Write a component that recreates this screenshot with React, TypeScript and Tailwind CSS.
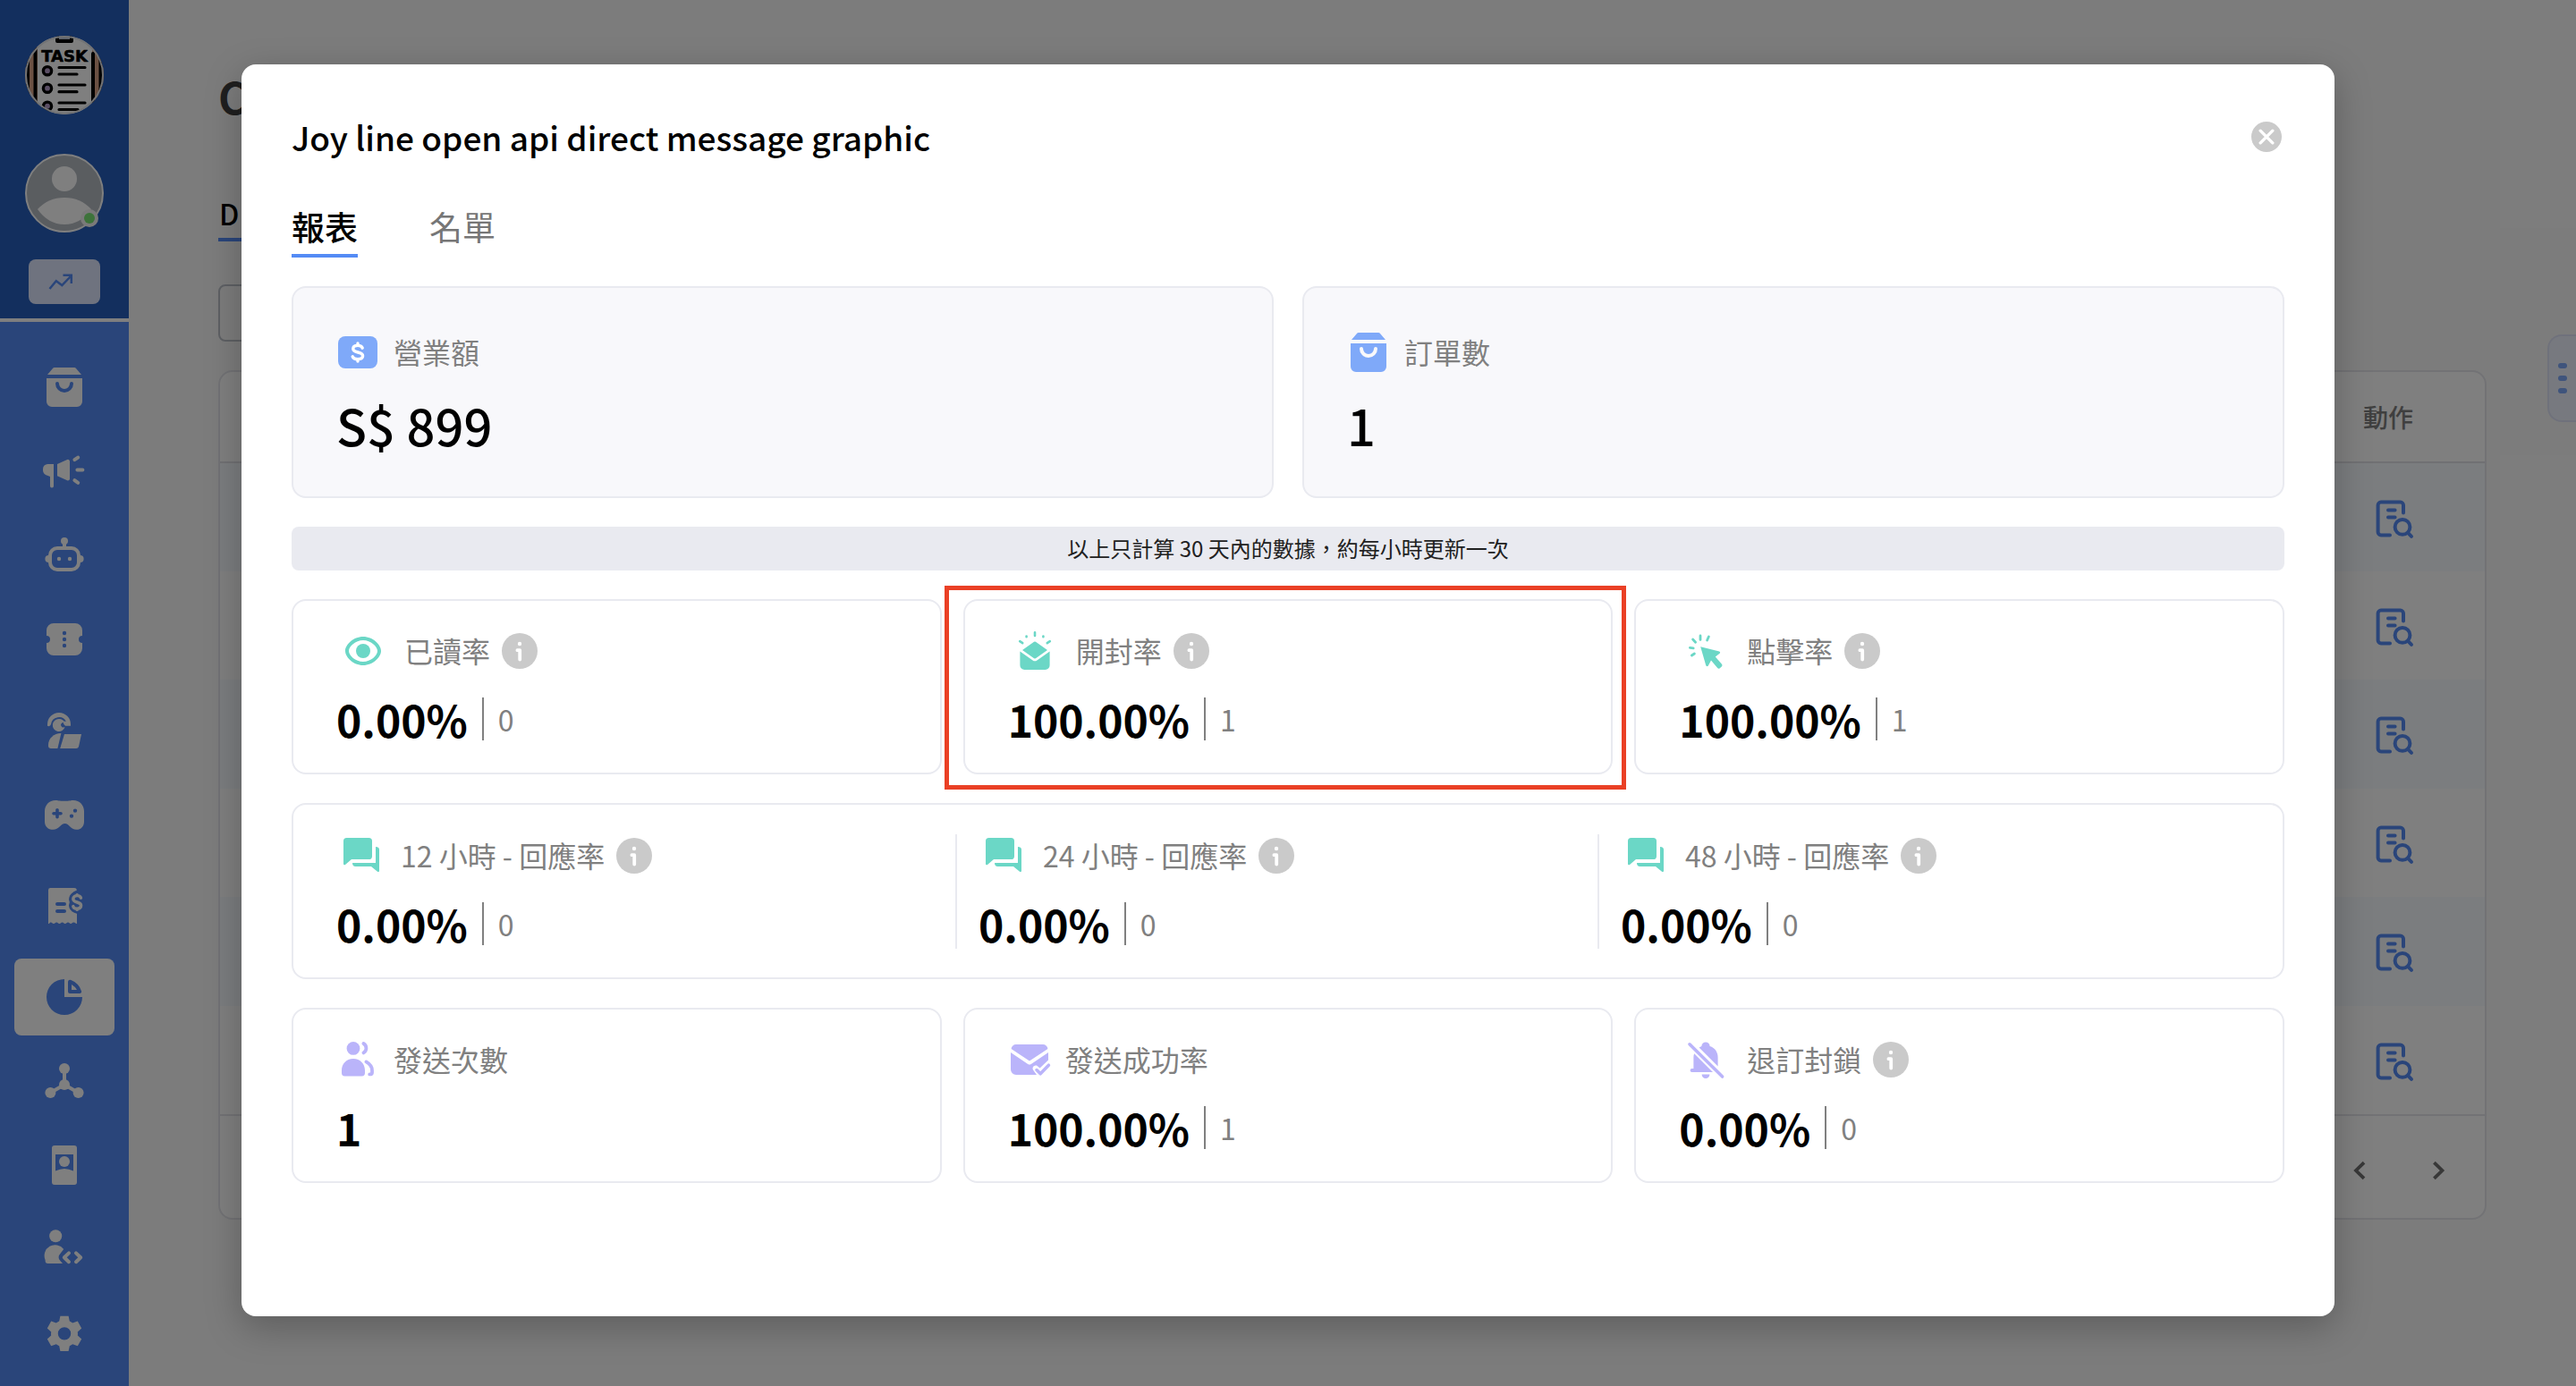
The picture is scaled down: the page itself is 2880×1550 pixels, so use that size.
import React from 'react';

type IconProps = { className?: string };

const Svg = ({ className = 'size-12', children }: { className?: string; children: React.ReactNode }) => (
  <svg viewBox="0 0 24 24" className={`shrink-0 ${className}`} fill="currentColor" aria-hidden="true">
    {children}
  </svg>
);

const stroke = {
  fill: 'none',
  stroke: 'currentColor',
  strokeWidth: 2,
  strokeLinecap: 'round' as const,
  strokeLinejoin: 'round' as const,
};

/* ---------- sidebar icons ---------- */

const BagIcon = ({ className }: IconProps) => (
  <Svg className={className}>
    <path d="M5.6 1.4A1 1 0 0 1 6.4 1h11.2a1 1 0 0 1 .8.4L21.5 5h-19z" />
    <path
      fillRule="evenodd"
      d="M2 7h20v13a3 3 0 0 1-3 3H5a3 3 0 0 1-3-3zM8 9a1 1 0 0 0-1 1 5 5 0 0 0 10 0 1 1 0 0 0-2 0 3 3 0 0 1-6 0 1 1 0 0 0-1-1z"
    />
  </Svg>
);

const MegaphoneIcon = () => (
  <Svg>
    <path d="M6 8v12.200a1 1 0 0 1-2 0v-5.200L2.800 14.500A3 3 0 0 1 0 11.500V10.700A2.700 2.700 0 0 1 2.700 8z" />
    <path d="M8 8 13.600 5.500a1 1 0 0 1 1.400.9v9.800a1 1 0 0 1-1.400.9L8 14.600z" />
    <path {...stroke} d="M19.200 11.300h3M17.700 5.600l1.900-1.300M17.700 17.100l1.900 1.300" />
  </Svg>
);

const RobotIcon = () => (
  <Svg>
    <rect x="4" y="8" width="16" height="12" rx="4" {...stroke} />
    <circle cx="12" cy="4" r="2" />
    <path d="M11 5h2v3h-2zM4 12v4h-.8a2 2 0 0 1 0-4zM20 12v4h.8a2 2 0 0 0 0-4z" />
    <circle cx="9" cy="14" r="1.100" />
    <circle cx="15" cy="14" r="1.100" />
  </Svg>
);

const TicketIcon = () => (
  <Svg>
    <path
      fillRule="evenodd"
      d="M6 3h12a4 4 0 0 1 4 4v3a2 2 0 0 0 0 4v3a4 4 0 0 1-4 4H6a4 4 0 0 1-4-4v-3a2 2 0 0 0 0-4V7a4 4 0 0 1 4-4zm6 4.400a1.100 1.100 0 1 0 0 2.200 1.100 1.100 0 0 0 0-2.200zm0 3.500a1.100 1.100 0 1 0 0 2.200 1.100 1.100 0 0 0 0-2.200zm0 3.500a1.100 1.100 0 1 0 0 2.200 1.100 1.100 0 0 0 0-2.200z"
    />
  </Svg>
);

const AgentIcon = () => (
  <Svg>
    <path d="M2.500 9.400V8.500a6.500 6.500 0 0 1 13 0v.9h-3l-1-1.200a1 1 0 0 1 1.500-1.200A4.500 4.500 0 0 0 4.500 8.500 1.500 1.500 0 0 1 2.500 9.400z" />
    <path
      fillRule="evenodd"
      d="M9 5.500a3.500 3.500 0 1 0 3.300 4.400 1.400 1.400 0 0 1-2.300-1.100 1.400 1.400 0 0 1 2.300-1A3.500 3.500 0 0 0 9 5.500z"
    />
    <path d="M10.200 13.500C6 13.500 3 16.500 3 20v.5A1.500 1.500 0 0 0 4.500 22h3.700z" />
    <path d="M12 14h9.500L20 21a1.500 1.500 0 0 1-1.400 1H9.600z" />
  </Svg>
);

const GameIcon = () => (
  <Svg>
    <path
      fillRule="evenodd"
      d="M7 4c1.200 0 2 .4 5 .4S15.800 4 17 4c3.500 0 6 2.800 6 6v6c0 2.600-1.700 4.400-4.300 4.400-3.200 0-4-3.400-6.400-3.400s-3.400 3.400-6.600 3.400C2.800 20.400 1 18.600 1 16v-6c0-3.200 2.500-6 6-6zm1 4.500c-.5 0-.9.400-.9.900v1.100H6a.9.900 0 0 0 0 1.800h1.100v1.100a.9.900 0 0 0 1.800 0v-1.100H10a.9.900 0 0 0 0-1.800H8.900V9.400c0-.5-.4-.9-.9-.9zM18 8.700a1.100 1.100 0 1 0 0 2.200 1.100 1.100 0 0 0 0-2.200zm-2 3a1.100 1.100 0 1 0 0 2.200 1.100 1.100 0 0 0 0-2.200z"
    />
  </Svg>
);

const ReceiptIcon = () => (
  <Svg>
    <path
      fillRule="evenodd"
      d="M3 3.200A1.200 1.200 0 0 1 4.200 2h13.300a1.500 1.500 0 0 1 1.500 1.200l-1.800.9c-1.900 1.200-2.700 2.800-2.700 4.400l.4 1.500-.4 1.600c0 1.800 1.200 4 4.500 4.800V22c-1 0-.8-.8-1.800-.8s-.8.800-1.600.8-.8-.8-1.600-.8-.8.800-1.600.8-.8-.8-1.600-.8-.8.800-1.600.8-.8-.8-1.600-.8-.8.800-1.600.8-.8-.8-1.600-.8S4 22 3 22zM8 10a1 1 0 0 0 0 2h4a1 1 0 0 0 0-2zm0 4a1 1 0 0 0 0 2h4a1 1 0 0 0 0-2z"
    />
    <path
      {...stroke}
      strokeWidth="1.700"
      d="M21.200 7.600c-.2-1-1-1.300-2.100-1.300s-2.200.6-2.200 1.800c0 2.500 4.400 1.300 4.400 3.700 0 1.200-1 1.800-2.200 1.800s-2-.4-2.200-1.300M19.100 5.800v.5M19.100 13.700v.5"
    />
  </Svg>
);

const PieIcon = () => (
  <Svg>
    <path d="M12 2v10h10A10 10 0 1 1 12 2z" />
    <path fillRule="evenodd" d="M14 3.500a1.200 1.200 0 0 1 1.700-1A10 10 0 0 1 21.500 8.600 1 1 0 0 1 20.600 10H15a1 1 0 0 1-1-1zM16 5v3h3a8 8 0 0 0-3-3z" />
  </Svg>
);

const NetworkIcon = () => (
  <Svg>
    <circle cx="12" cy="5" r="3" />
    <circle cx="12" cy="14" r="3" />
    <circle cx="4.200" cy="18.500" r="3" />
    <circle cx="19.800" cy="18.500" r="3" />
    <path {...stroke} d="M12 5v9M12 14l-7.800 4.500M12 14l7.800 4.500" />
  </Svg>
);

const BadgeIcon = () => (
  <Svg>
    <path fillRule="evenodd" d="M6.500 1h11A1.500 1.500 0 0 1 19 2.500v19a1.500 1.500 0 0 1-1.500 1.500h-11A1.500 1.500 0 0 1 5 21.500v-19A1.500 1.500 0 0 1 6.500 1zM7 6v9.300Q12 12.700 17 15.300V6z" />
    <circle cx="12" cy="10" r="3" />
  </Svg>
);

const DevIcon = () => (
  <Svg>
    <circle cx="7.100" cy="4.600" r="3.500" />
    <path d="M11.600 12A6 6 0 0 0 1.300 18v.4A1.600 1.600 0 0 0 3 20h8l-1.400-1.600a2.600 2.600 0 0 1 0-3.800z" />
    <path {...stroke} d="M14.500 14.200 11.900 16.600l2.600 2.500M18.500 14.200l2.600 2.400-2.600 2.500" />
  </Svg>
);

const GearIcon = () => (
  <Svg>
    <path
      fillRule="evenodd"
      d="M9.700 2.400h4.600l.6 2.900a7 7 0 0 1 1.700 1l2.800-1 2.200 3.900-2.200 2a7 7 0 0 1 0 2l2.200 2-2.200 3.900-2.800-1a7 7 0 0 1-1.700 1l-.6 2.900H9.700l-.6-2.900a7 7 0 0 1-1.700-1l-2.800 1-2.200-3.900 2.200-2a7 7 0 0 1 0-2l-2.200-2 2.200-3.900 2.800 1a7 7 0 0 1 1.700-1zM12 8.600a3.600 3.600 0 1 0 0 7.200 3.600 3.600 0 0 0 0-7.200z"
    />
  </Svg>
);

/* ---------- report icons ---------- */

const MoneyIcon = () => (
  <Svg>
    <rect x="1" y="3" width="22" height="18" rx="4" />
    <path
      d="M14.600 9.600c-.3-1-1.300-1.400-2.600-1.400s-2.600.5-2.600 1.800c0 2.800 5.400 1.200 5.400 4 0 1.300-1.400 1.800-2.800 1.800s-2.500-.4-2.900-1.400M12 7v1.200M12 15.800V17"
      fill="none"
      stroke="#fff"
      strokeWidth="1.700"
      strokeLinecap="round"
    />
  </Svg>
);

const EyeIcon = () => (
  <Svg>
    <path fillRule="evenodd" d="M12 4c5.600 0 10 4.600 10 8s-4.400 8-10 8S2 15.400 2 12s4.400-8 10-8zm0 2c-4.300 0-8 3.500-8 6s3.700 6 8 6 8-3.500 8-6-3.700-6-8-6z" />
    <circle cx="12" cy="12" r="4" />
  </Svg>
);

const OpenMailIcon = () => (
  <Svg>
    <path d="M11 7.200a1.500 1.500 0 0 1 2 0l6 4.300-6 4.300a1.500 1.500 0 0 1-2 0l-6-4.300z" />
    <path d="M3.700 12.300 10.800 17.200a2 2 0 0 0 2.400 0L20.300 12.300V20a2.500 2.500 0 0 1-2.500 2.500H6.200A2.500 2.500 0 0 1 3.700 20z" />
    <path {...stroke} strokeWidth="1.300" d="M12 1.600v1.900M7.300 3.800v.3M16.700 3.800v.3M3.600 6.600l1.500 1M20.400 6.600l-1.500 1" />
  </Svg>
);

const ClickIcon = () => (
  <Svg>
    <path d="M9.100 9.600 19.600 12.200a.7.700 0 0 1 .2 1.200l-2.400 1.800 3.600 4.200a.9.900 0 0 1-.1 1.300l-1 .9a.9.900 0 0 1-1.300-.1l-3.600-4.200-1.600 2.900a.7.700 0 0 1-1.300-.2z" />
    <path {...stroke} strokeWidth="1.400" d="M9 3.500v2.200M13.700 4l-.9 2M4.800 5.500l1.500 1.600M3.200 10.200l1.900.2M4.200 14.500l1.500-1" />
  </Svg>
);

const ChatIcon = () => (
  <Svg>
    <path d="M3.800 2h12.400A1.800 1.800 0 0 1 18 3.800v8.400a1.800 1.800 0 0 1-1.800 1.800H6.500L3 17c-.4.300-1 0-1-.5V3.800A1.800 1.800 0 0 1 3.800 2z" />
    <path d="M20 7c1.200 0 2 .6 2 1.500V20.500c0 .5-.6.700-1 .4L17.500 18H8.800C7.600 18 7 17.200 7 16h13z" />
  </Svg>
);

const PeopleIcon = () => (
  <Svg>
    <circle cx="9.500" cy="5.700" r="3.700" />
    <path d="M9.500 11.500c4 0 6.500 3 6.500 6.500v1.500a1.700 1.700 0 0 1-1.700 1.700H4.700A1.700 1.700 0 0 1 3 19.500V18c0-3.500 2.500-6.500 6.500-6.500z" />
    <path {...stroke} strokeWidth="1.900" d="M15.200 3a3 3 0 0 1 0 5.200M16.700 13.200c2 1.200 3.300 3 3.300 4.800v1.200c0 .7-.4 1-1.400 1" />
  </Svg>
);

const MailCheckIcon = () => (
  <Svg>
    <path d="M4.500 3.500h15A2.700 2.700 0 0 1 22.200 6L12 12.800 1.800 6a2.700 2.700 0 0 1 2.700-2.500z" />
    <path d="M1.500 8l9.600 6.500a1.600 1.600 0 0 0 1.800 0L22.500 8v4.300l-4.700 4.500-1.500-1.300c-1.600-.8-3.200 1-2.200 2.400L16 20.500H4.500a3 3 0 0 1-3-3z" />
    <path {...stroke} strokeWidth="1.800" d="M16 17.800l2.100 2.100 4.600-4.800" />
  </Svg>
);

const BellOffIcon = () => (
  <Svg>
    <path d="M9.700 4.500A2.300 2.300 0 0 1 14.300 4.500c3 .9 4.500 3.500 4.500 6.300v5L8.300 5.200zM5.600 8.600 16 19H4.300a1 1 0 0 1 0-2h.9v-6.200c0-.8.100-1.500.4-2.200zM9.800 20.300h4.400a2.200 2.200 0 0 1-4.400 0z" />
    <path {...stroke} strokeWidth="1.800" d="M3 3.400 21.300 21.500" />
  </Svg>
);

const InfoIcon = () => (
  <Svg className="size-12">
    <circle cx="12" cy="12" r="10" fill="#cacaca" />
    <circle cx="12" cy="8" r="1.100" fill="#fff" />
    <path d="M10.700 11.600h1.400v5.200" fill="none" stroke="#fff" strokeWidth="1.900" strokeLinecap="round" strokeLinejoin="round" />
  </Svg>
);

const DocSearchIcon = () => (
  <Svg>
    <path {...stroke} d="M10 21.200H5A1.700 1.700 0 0 1 3.300 19.500V4.500A1.700 1.700 0 0 1 5 2.800h10.800A1.700 1.700 0 0 1 17.500 4.500v4.200M9 7.300h3.800M9 11.200h3.800" />
    <circle cx="17" cy="16.700" r="4.200" {...stroke} />
    <path {...stroke} d="M20.300 20.200l1.700 1.700" />
  </Svg>
);

/* ---------- sidebar ---------- */

const Logo = () => (
  <svg viewBox="0 0 88 88" className="size-22 rounded-full bg-white" role="img" aria-label="Task">
    <rect x="0" width="14" height="88" fill="#d8a286" />
    <rect x="75" width="13" height="88" fill="#d8a286" />
    <path d="M3 16v56M11.500 14v62M76 20v54M84.500 20v48" stroke="#000" strokeWidth="4" strokeLinecap="round" />
    <path d="M36 0v6h16V0" fill="#b9c3d4" stroke="#000" strokeWidth="4" strokeLinejoin="round" />
    <text
      x="44"
      y="29"
      textAnchor="middle"
      fontFamily="DejaVu Sans"
      fontWeight="700"
      fontSize="18"
      stroke="#000"
      strokeWidth="0.600"
      strokeLinejoin="round"
    >
      TASK
    </text>
    <path d="M38 35.500h29M38 43h20M38 55h29M38 62.700h20M38 75h29M38 82.500h21" stroke="#000" strokeWidth="3.200" strokeLinecap="round" />
    {[39.2, 58.7, 78.7].map((y) => (
      <circle key={y} cx="25" cy={y} r="4.600" fill="#b79fcb" stroke="#000" strokeWidth="3.400" />
    ))}
    <circle cx="44" cy="44" r="43" fill="none" stroke="#e5e7eb" strokeWidth="2" />
  </svg>
);

const Avatar = () => (
  <svg viewBox="0 0 88 88" className="mt-11 size-22" role="img" aria-label="Online">
    <circle cx="44" cy="44" r="43" fill="#b4bac1" stroke="#fff" strokeWidth="2" />
    <circle cx="44" cy="28" r="14" fill="#fff" />
    <path d="M14 62Q26 49 44 49T74 62Q62 79 44 79T14 62z" fill="#fff" />
    <circle cx="72" cy="72" r="10" fill="#f4f4f4" />
    <circle cx="72" cy="72" r="6" fill="#7ae675" />
  </svg>
);

const navGroups = [
  [
    { name: '商店', icon: BagIcon },
    { name: '廣播', icon: MegaphoneIcon },
    { name: '機器人', icon: RobotIcon },
    { name: '票券', icon: TicketIcon },
  ],
  [
    { name: '客服', icon: AgentIcon },
    { name: '遊戲', icon: GameIcon },
  ],
  [{ name: '帳單', icon: ReceiptIcon }],
  [
    { name: '分析', icon: PieIcon, active: true },
    { name: '整合', icon: NetworkIcon },
    { name: '會員', icon: BadgeIcon },
    { name: '開發者', icon: DevIcon },
    { name: '設定', icon: GearIcon },
  ],
];

const Sidebar = () => (
  <aside className="flex w-36 shrink-0 flex-col bg-[#548bf5]">
    <div className="flex flex-col items-center border-b-4 border-white bg-[#265ebc] pt-10 pb-4">
      <Logo />
      <Avatar />
      <button type="button" aria-label="趨勢" className="mt-[30px] flex h-[50px] w-20 items-center justify-center rounded-lg bg-[#dee7ff] text-[#548bf5]">
        <svg viewBox="0 0 36 20" className="h-5 w-9" fill="none" stroke="currentColor" strokeWidth="2.500" aria-hidden="true">
          <path d="M1.500 18 8.800 9.300l6.500 4.700L26 3M16.500 2.800h9.300V12" strokeLinejoin="miter" />
        </svg>
      </button>
    </div>
    <nav className="flex flex-col gap-4 px-4 pt-[30px]">
      {navGroups.map((group, i) => (
        <div key={i} className="flex flex-col gap-2">
          {group.map(({ name, icon: Icon, active }) => (
            <a
              key={name}
              href="#"
              aria-label={name}
              className={`flex h-[86px] items-center justify-center rounded-lg ${active ? 'bg-white text-[#548bf5]' : 'text-white'}`}
            >
              <Icon />
            </a>
          ))}
        </div>
      ))}
    </nav>
  </aside>
);

/* ---------- page behind the dialog ---------- */

const Page = () => (
  <main className="flex min-w-0 flex-1 bg-[#f9f9f9]">
    <div className="min-w-0 flex-1 pt-[72px] pr-[68px] pl-[100px]">
      <h1 className="text-[48px] leading-[70px] font-bold text-[#3f3f3f]">C</h1>
      <div className="mt-[72px] flex">
        <button type="button" className="flex h-14 w-24 border-b-4 border-[#548bf5] pl-px text-[32px] leading-[48px] font-medium">
          D
        </button>
      </div>
      <input aria-label="搜尋" className="mt-12 block h-16 w-160 rounded-lg border-2 border-[#bcc0c8]" />
      <section className="mt-8 overflow-hidden rounded-2xl border-2 border-[#e4e5ea] bg-white">
        <table className="w-full text-left">
          <thead>
            <tr className="h-[101px] border-b-2 border-[#e0e1e6]">
              <th className="pl-[2396px] text-[28px] font-medium whitespace-nowrap text-[#7f7f7f]">動作</th>
            </tr>
          </thead>
          <tbody>
            {[1, 2, 3, 4, 5, 6].map((row) => (
              <tr key={row} className="h-[121px] odd:h-[122px] odd:bg-[#f7fafe]">
                <td className="pt-0.5 pl-[2406px] text-[#548bf5]">
                  <button type="button" aria-label="查看報表" className="block">
                    <DocSearchIcon />
                  </button>
                </td>
              </tr>
            ))}
          </tbody>
        </table>
        <div className="flex h-[116px] items-center justify-end gap-10 border-t-2 border-[#e4e5ea] pt-2 pr-7 text-[#707070]">
          {['上一頁', '下一頁'].map((name, i) => (
            <button key={name} type="button" aria-label={name}>
              <Svg>
                <path d={i === 0 ? 'M14.500 7.600 10 12l4.500 4.400' : 'M9.700 7.600 14.200 12l-4.500 4.400'} fill="none" stroke="currentColor" strokeWidth="1.900" />
              </Svg>
            </button>
          ))}
        </div>
      </section>
    </div>
    <div className="w-8 shrink-0 pt-[374px]">
      <button type="button" aria-label="更多" className="flex h-[98px] w-full flex-col justify-center gap-2 rounded-l-2xl border-2 border-r-0 border-[#dfe3f6] bg-[#eef3ff] pl-2.5">
        {[1, 2, 3].map((dot) => (
          <span key={dot} className="h-1.5 w-2.5 rounded-full bg-[#7ea8f8]" />
        ))}
      </button>
    </div>
  </main>
);

/* ---------- report ---------- */

type Metric = {
  label: string;
  value: string;
  count?: string;
  info?: boolean;
  icon: () => React.JSX.Element;
  slot: string;
};

const openMetrics: Metric[] = [
  { label: '已讀率', value: '0.00%', count: '0', info: true, icon: EyeIcon, slot: 'w-[60px] text-[#6bd7c6]' },
  { label: '開封率', value: '100.00%', count: '1', info: true, icon: OpenMailIcon, slot: 'w-[60px] text-[#6bd7c6]' },
  { label: '點擊率', value: '100.00%', count: '1', info: true, icon: ClickIcon, slot: 'w-[60px] text-[#6bd7c6]' },
];

const replyMetrics: Metric[] = ['12', '24', '48'].map((hours) => ({
  label: `${hours} 小時 - 回應率`,
  value: '0.00%',
  count: '0',
  info: true,
  icon: ChatIcon,
  slot: 'w-14 text-[#6bd7c6]',
}));

const sendMetrics: Metric[] = [
  { label: '發送次數', value: '1', icon: PeopleIcon, slot: 'w-12 text-[#bab4fa]' },
  { label: '發送成功率', value: '100.00%', count: '1', icon: MailCheckIcon, slot: 'w-12 text-[#bab4fa]' },
  { label: '退訂封鎖', value: '0.00%', count: '0', info: true, icon: BellOffIcon, slot: 'w-[60px] text-[#bab4fa]' },
];

const Label = ({ label, info, icon: Icon, slot }: Pick<Metric, 'label' | 'info' | 'icon' | 'slot'>) => (
  <div className="flex h-12 items-center text-[32px] leading-[46px] text-[#808080]">
    <span className={`mr-4 flex shrink-0 justify-center ${slot}`}>
      <Icon />
    </span>
    <h3 className="pb-0.5">{label}</h3>
    {info && (
      <button type="button" aria-label={`${label}說明`} className="ml-[9px]">
        <InfoIcon />
      </button>
    )}
  </div>
);

const MetricBody = ({ metric }: { metric: Metric }) => (
  <>
    <Label {...metric} />
    <div className="mt-7 flex h-12 items-center">
      <strong className="text-[48px] leading-12 font-bold">{metric.value}</strong>
      {metric.count && <span className="ml-4 border-l-2 border-[#808080] pl-4 text-[32px] leading-12 text-[#808080]">{metric.count}</span>}
    </div>
  </>
);

const MetricCard = ({ metric, highlighted }: { metric: Metric; highlighted?: boolean }) => (
  <article className="relative rounded-2xl border-2 border-[#e9eaf0] px-12 pt-8 pb-9">
    <MetricBody metric={metric} />
    {highlighted && <div className="pointer-events-none absolute -top-[17px] -right-[17px] -bottom-[19px] -left-[23px] border-5 border-[#ea4025]" />}
  </article>
);

const SummaryCard = ({ label, value, icon }: { label: string; value: string; icon: Metric['icon'] }) => (
  <article className="rounded-2xl border-2 border-[#e9eaf0] bg-[#f8f8fb] px-12 pt-12 pb-13">
    <Label label={label} icon={icon} slot="w-12 text-[#7fa9f9]" />
    <p className="mt-[29px] text-[56px] leading-14 font-medium">{value}</p>
  </article>
);

const ReportDialog = () => (
  <div role="dialog" aria-modal="true" aria-labelledby="report-title" className="flex-1 rounded-2xl bg-white px-14 pt-14 pb-[149px] text-black shadow-[0_12px_40px_rgba(0,0,0,0.25)]">
    <header className="flex h-[50px] items-center justify-between">
      <h2 id="report-title" className="text-[37px] leading-[50px] font-medium">
        Joy line open api direct message graphic
      </h2>
      <button type="button" aria-label="關閉" className="size-10">
        <Svg className="size-10">
          <circle cx="12" cy="12" r="10.200" fill="#cacaca" />
          <path d="M7.900 7.900l8.200 8.200M16.100 7.900l-8.200 8.200" stroke="#fff" strokeWidth="2" strokeLinecap="round" />
        </Svg>
      </button>
    </header>
    <div role="tablist" className="mt-11 flex gap-20 text-[37px] leading-[62px]">
      <button role="tab" aria-selected="true" type="button" className="border-b-4 border-[#548bf5] font-medium">
        報表
      </button>
      <button role="tab" aria-selected="false" type="button" className="border-b-4 border-transparent text-[#767676]">
        名單
      </button>
    </div>
    <div className="mt-8 flex flex-col gap-8">
      <section className="grid grid-cols-2 gap-8">
        <SummaryCard label="營業額" value="S$ 899" icon={MoneyIcon} />
        <SummaryCard label="訂單數" value="1" icon={BagIcon} />
      </section>
      <p className="rounded-lg bg-[#e9eaf0] pb-0.5 text-center text-[24px] leading-[47px] text-[#212121]">以上只計算 30 天內的數據，約每小時更新一次</p>
      <section className="grid grid-cols-3 gap-6">
        {openMetrics.map((metric, i) => (
          <MetricCard key={metric.label} metric={metric} highlighted={i === 1} />
        ))}
      </section>
      <section className="grid grid-cols-3 rounded-2xl border-2 border-[#e9eaf0] pt-[33px] pr-12 pb-8 pl-[22px]">
        {replyMetrics.map((metric) => (
          <article key={metric.label} className="border-l-2 border-[#e9eaf0] pb-1 pl-6 first:border-transparent">
            <MetricBody metric={metric} />
          </article>
        ))}
      </section>
      <section className="grid grid-cols-3 gap-6">
        {sendMetrics.map((metric) => (
          <MetricCard key={metric.label} metric={metric} />
        ))}
      </section>
    </div>
  </div>
);

export default function App() {
  return (
    <div lang="zh-Hant" className="relative flex min-h-screen font-['Noto_Sans_CJK_TC',sans-serif]">
      <Sidebar />
      <Page />
      <div className="absolute inset-0 flex items-start bg-black/50 px-[270px] pt-[72px] pb-[78px]">
        <ReportDialog />
      </div>
    </div>
  );
}
